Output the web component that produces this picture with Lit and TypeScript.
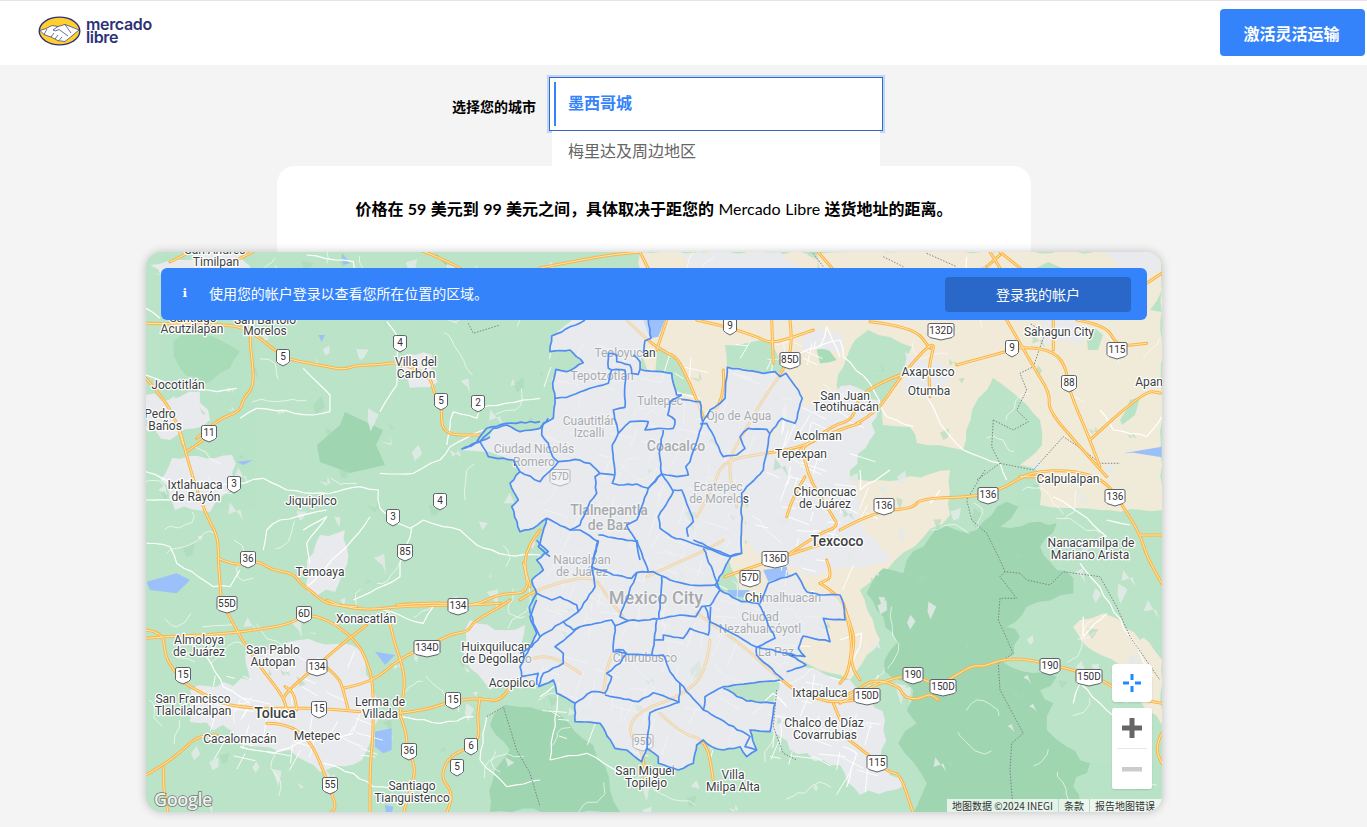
import { LitElement, html, css, svg } from "lit";
import { customElement } from "lit/decorators.js";

type Pt = [number, number];
const pts = (ox: number, oy: number, s: string): Pt[] =>
  s.trim().split(/\s+/).map((p) => {
    const [x, y] = p.split(",").map(Number);
    return [ox + x / 3, oy + y / 3] as Pt;
  });
const page = (s: string): Pt[] =>
  s.trim().split(/\s+/).map((p) => p.split(",").map(Number) as Pt);
const straight = (a: Pt[], close = false) =>
  "M" + a.map((p) => `${p[0].toFixed(1)} ${p[1].toFixed(1)}`).join("L") + (close ? "Z" : "");
const smooth = (a: Pt[]) => {
  if (a.length < 3) return straight(a);
  let d = `M${a[0][0].toFixed(1)} ${a[0][1].toFixed(1)}`;
  for (let i = 1; i < a.length - 1; i++) {
    const mx = (a[i][0] + a[i + 1][0]) / 2;
    const my = (a[i][1] + a[i + 1][1]) / 2;
    d += `Q${a[i][0].toFixed(1)} ${a[i][1].toFixed(1)} ${mx.toFixed(1)} ${my.toFixed(1)}`;
  }
  const l = a[a.length - 1];
  return d + `L${l[0].toFixed(1)} ${l[1].toFixed(1)}`;
};

/* mulberry32: small deterministic generator */
let seed = 20240613;
const rnd = () => {
  seed = (seed + 0x6d2b79f5) | 0;
  let t = Math.imul(seed ^ (seed >>> 15), 1 | seed);
  t = (t + Math.imul(t ^ (t >>> 7), 61 | t)) ^ t;
  return ((t ^ (t >>> 14)) >>> 0) / 4294967296;
};

/* roughen a closed outline so that land edges read as organic */
const jag = (a: Pt[], amp: number, step = 11): Pt[] => {
  const out: Pt[] = [];
  for (let i = 0; i < a.length; i++) {
    const p = a[i];
    const q = a[(i + 1) % a.length];
    const dx = q[0] - p[0];
    const dy = q[1] - p[1];
    const len = Math.hypot(dx, dy);
    const n = Math.max(1, Math.round(len / step));
    for (let k = 0; k < n; k++) {
      const t = k / n;
      const off = k === 0 ? 0 : (rnd() - 0.5) * 2 * amp;
      out.push([p[0] + dx * t - (dy / (len || 1)) * off, p[1] + dy * t + (dx / (len || 1)) * off]);
    }
  }
  return out;
};
/* same idea for an open road line */
const wiggle = (a: Pt[], amp: number, step = 9): Pt[] => {
  const out: Pt[] = [];
  for (let i = 0; i < a.length - 1; i++) {
    const p = a[i];
    const q = a[i + 1];
    const dx = q[0] - p[0];
    const dy = q[1] - p[1];
    const len = Math.hypot(dx, dy);
    const n = Math.max(1, Math.round(len / step));
    for (let k = 0; k < n; k++) {
      const t = k / n;
      const off = k === 0 ? 0 : (rnd() - 0.5) * 2 * amp;
      out.push([p[0] + dx * t - (dy / (len || 1)) * off, p[1] + dy * t + (dx / (len || 1)) * off]);
    }
  }
  out.push(a[a.length - 1]);
  return out;
};

const Z3 = (s: string) => pts(140, 245, s);
const Z5 = (s: string) => pts(480, 320, s);
const Z6 = (s: string) => pts(520, 540, s);
const Z7 = (s: string) => pts(140, 600, s);
const Z8 = (s: string) => pts(800, 250, s);
const Z9 = (s: string) => pts(840, 470, s);
const Z10 = (s: string) => pts(140, 430, s);

/* ---------- land ---------- */
const tan = [
  "640,252 1162,252 1162,510 1100,510 1040,505 1030,470 950,470 950,515 895,560 860,590 880,640 850,680 800,660 745,600 700,500 640,350",
  "1073,627 1080,620 1115,613 1140,635 1162,660 1162,725 1140,700 1120,665 1085,645",
  "1010,795 1012,780 1025,774 1033,785 1035,812 1008,812",
].map((s) => straight(jag(page(s), 2.2), true));

const green = [
  "838,375 855,340 868,330 912,347 905,365 882,403 883,425 910,427 917,443 963,450 972,410 993,378 1012,392 1040,420 1042,445 1020,465 1040,470 1040,505 950,505 950,470 900,480 850,480 838,470",
  "655,345 680,360 693,395 672,390 655,375",
  "725,345 770,340 785,372 727,367",
  "1087,340 1095,328 1103,335 1098,350 1088,350",
  "1120,420 1130,400 1140,397 1135,415 1122,425",
  "1150,310 1162,290 1162,312",
  "1030,270 1048,262 1062,268 1055,278 1035,278",
  "745,500 790,490 770,520 745,545",
  "1140,640 1120,620 1100,612 1120,600 1162,620",
].map((s) => straight(jag(page(s), 2), true));

const dark = [
  jag(Z9("290,175 410,180 500,95 535,110 480,170 600,155 650,160 600,230 650,300 700,325 700,370 560,410 500,470 540,500 520,555 480,570 510,590 580,610 650,620 600,660 640,700 620,780 680,830 750,880 700,950 730,1030 220,1030 260,940 175,820 230,760 200,720 220,660 130,600 170,520 110,420 80,370 130,295 190,310 200,270"), 3.5),
  page("345,412 383,430 376,445 385,465 350,473 320,462 317,445 340,425"),
  jag(page("520,707 560,715 593,745 610,790 620,812 490,812 495,770 510,750 490,725 505,705"), 4),
].map((a) => straight(a, true));
const mid = [
  Z3("100,290 150,270 250,290 300,320 270,370 190,420 120,370"),
  Z8("50,300 80,290 110,330 60,340"),
].map((a) => straight(jag(a, 3), true));

const urban = [
  "300,640 360,650 372,690 378,720 362,760 320,772 290,750 250,746 230,730 190,722 190,690 250,680 245,655",
  "172,458 232,455 232,490 210,512 175,510 160,480",
  "307,560 320,535 345,530 347,565 335,592 308,592",
  "400,358 432,355 438,382 410,388",
  "780,420 850,385 880,400 870,440 850,470 860,520 890,560 820,575 770,560 745,540 745,470",
  "780,680 800,665 850,680 870,700 885,720 880,760 905,785 860,795 840,765 790,750 768,720",
  "470,620 495,630 525,625 525,680 490,690 465,660",
  "150,265 240,252 250,275 170,290",
  "680,252 780,252 800,268 700,300",
  "1040,315 1085,305 1080,345 1040,342",
  "905,352 950,370 940,395 905,395",
  "146,395 170,400 200,392 210,420 170,440 146,430",
  "1105,250 1162,250 1162,275 1120,270",
  "800,330 840,332 842,352 805,352",
].map((s) => straight(jag(page(s), 4, 9), true));

/* deterministic scatter of small patches and side streets */
const patches: string[] = [];
const darkPatches: string[] = [];
for (let i = 0; i < 260; i++) {
  const x = 146 + rnd() * 1016;
  const y = 252 + rnd() * 560;
  const r = 4 + rnd() * 9;
  const a = rnd() * 6.28;
  const tri = `M${x.toFixed(1)} ${y.toFixed(1)}L${(x + r * Math.cos(a)).toFixed(1)} ${(y + r * Math.sin(a)).toFixed(1)}L${(x + r * Math.cos(a + 1)).toFixed(1)} ${(y + r * Math.sin(a + 1)).toFixed(1)}L${(x + 3).toFixed(1)} ${(y + r * 0.8).toFixed(1)}Z`;
  const inEast = x > 640 && y < 470;
  if (i % 3 === 2) darkPatches.push(tri);
  else if (!inEast) patches.push(tri);
}
const lanes: string[] = [];
for (let i = 0; i < 110; i++) {
  let x = 146 + rnd() * 1016;
  let y = 252 + rnd() * 560;
  let ang = rnd() * 6.28;
  const steps = 3 + Math.floor(rnd() * 5);
  const line: Pt[] = [[x, y]];
  for (let s = 0; s < steps; s++) {
    const l = 4 + rnd() * 8;
    ang += (rnd() - 0.5) * 1.8;
    x += l * Math.cos(ang);
    y += l * Math.sin(ang);
    line.push([x, y]);
  }
  lanes.push(straight(line));
}
const streets: string[] = [];
const addStreets = (x0: number, y0: number, w: number, h: number, n: number) => {
  for (let i = 0; i < n; i++) {
    const x = x0 + rnd() * w;
    const y = y0 + rnd() * h;
    const l = 8 + rnd() * 20;
    const a = 0.3 + (i % 2 ? 1.57 : 0) + (rnd() - 0.5) * 0.5;
    streets.push(`M${x.toFixed(1)} ${y.toFixed(1)}L${(x + l * Math.cos(a)).toFixed(1)} ${(y + l * Math.sin(a)).toFixed(1)}`);
  }
};
addStreets(540, 340, 280, 420, 190);
addStreets(200, 650, 170, 110, 45);
addStreets(780, 400, 90, 170, 30);
addStreets(780, 670, 100, 110, 25);

const water = [
  Z5("490,0 555,0 535,50 510,55"),
  Z6("730,90 800,80 805,105 745,125"),
  Z6("620,150 690,150 670,172 640,170"),
  Z7("705,155 765,165 735,195"),
  Z7("705,395 755,385 755,450 730,460 705,440"),
  Z10("20,455 110,430 150,450 110,490 30,480"),
  Z10("290,95 340,90 310,105"),
  Z3("605,25 630,55 610,60"),
  Z3("535,270 555,270 545,290"),
  Z8("970,610 1085,590 1085,622 1000,608"),
  Z7("735,615 760,620 755,640 738,640"),
].map((a) => straight(a, true));

/* ---------- roads ---------- */
const motor = [
  Z7("18,115 70,110 200,105 310,95 340,90 440,75 490,48 530,48 590,75 650,125 680,180 700,250 700,400 690,500 690,640"),
  Z7("18,90 70,95 75,170 105,215 130,250 190,280 240,310 330,325 440,325 540,325 660,335"),
  Z7("240,0 270,50 300,110 360,200 430,290 440,330"),
  Z7("680,75 620,120 540,190 440,275 430,300"),
  Z7("470,330 465,280 435,260"),
  Z7("610,265 700,245 760,190 830,150 900,120 940,100 985,95 1000,65 1090,15 1110,0"),
  Z7("540,185 595,230 610,270 625,330"),
  Z7("780,340 860,330 940,300 1030,295 1070,305 1100,280 1120,240"),
  Z7("1020,295 1010,350 1020,400 1000,440 930,465 900,530 940,580 920,640"),
  Z7("18,525 70,495 130,450 170,410 230,405"),
  Z7("70,500 70,570 85,640"),
  Z7("380,370 440,370 510,420 550,510 570,570 590,620 570,640"),
  Z7("780,345 800,400 800,440 825,500 820,540 790,640"),
  Z7("750,70 760,120 795,220 790,290 780,340"),
  Z7("560,0 600,20 690,30 770,20 930,15 985,15 1080,10"),
  Z3("18,235 150,238 300,240 360,280 410,320 450,345 540,360 610,375 650,360 720,360 770,350 870,390 880,440 905,480 905,570 1020,570"),
  Z3("330,250 330,300 345,420 310,460 300,500 240,520 170,580"),
  Z3("18,400 70,460 110,530 130,600"),
  Z3("280,50 340,20"),
  Z10("120,0 150,120 200,260 235,320 235,400 245,520"),
  Z10("140,65 190,30"),
  Z10("235,385 290,410 350,390 395,420 460,430 480,460 510,480 560,525 650,530"),
  Z10("770,525 900,515 1000,530 1080,490 1170,490 1150,400 1170,340 1200,300"),
  Z10("1150,400 1170,470"),
  Z5("440,0 500,60 560,100 590,110 630,190 670,290"),
  Z5("560,0 530,90"),
  Z5("650,0 740,20 830,50 870,70 930,55 1000,30"),
  Z5("875,0 880,130"),
  Z5("930,0 940,80 905,160 860,220 790,340 740,430 770,560"),
  Z5("1140,310 1070,330 970,380 860,400 730,420 700,500 650,590"),
  Z5("730,150 735,210 700,290"),
  Z5("970,380 975,460 1060,590 1075,620 1020,640 930,700"),
  Z5("975,470 940,530 920,590"),
  Z8("600,15 560,50"),
  Z8("620,210 700,350 750,430 745,480 830,580 920,680"),
  Z8("870,570 1030,420 1085,430"),
  Z8("170,520 230,490 300,380 410,260 385,350 390,440"),
  Z8("300,375 180,420 160,510 100,525 0,600"),
  Z8("470,345 620,305 660,290 750,300 795,340 810,430 860,545 900,650"),
  Z8("210,215 340,230 390,295"),
  Z8("830,210 920,225 950,290 1040,280"),
  Z8("760,210 760,300"),
  Z8("1040,100 1085,70"),
  Z8("660,680 830,680 900,690"),
  Z9("0,180 100,125 220,115 240,85 420,80 500,50 570,5 700,0 790,30 830,80 900,190 920,260 965,340"),
  Z9("900,195 965,195"),
  Z9("0,700 90,650 190,615 250,625 290,650 340,620 400,585 430,590 480,570 540,565 620,580 700,600 790,630 860,680 965,700"),
  Z9("0,680 40,670 100,625 180,650 190,680 230,690 270,670 295,690"),
  Z9("10,400 40,500 25,610 0,640"),
  Z9("0,790 80,850 150,910 180,910 220,1030"),
  Z9("965,790 945,830 965,880"),
  Z6("615,110 730,70 880,20 950,0"),
  Z6("920,60 940,110 900,130"),
  Z6("900,130 960,165 990,250 1005,300 990,370 1020,420"),
  Z6("850,450 900,490 1020,480"),
  Z6("940,490 965,550"),
  Z6("530,220 650,300 760,400 850,470"),
  Z6("0,180 40,150 220,100 260,170 310,230"),
  Z6("180,400 100,340 0,365"),
  Z6("570,300 560,400 480,470 360,510 320,570 370,640 375,720"),
  Z6("420,520 480,580 560,600 580,720"),
  Z6("250,460 260,380 280,340"),
  Z6("610,0 580,20 380,110"),
  page("420,250 440,258 460,268"),
  page("540,268 600,256 640,252"),
  page("640,252 648,268"),
  page("818,252 832,268"),
  page("170,262 190,252"),
  page("1000,252 1020,268"),
  page("1000,268 990,252"),
].map((a) => smooth(a));

const minor = [
  Z10("230,170 370,145 440,180 520,190 590,185 660,170 715,180 720,235 760,275 810,295 850,270 910,290 960,300 1010,345 1100,375 1200,375"),
  Z10("18,125 100,160 150,150"),
  Z10("18,210 100,210"),
  Z10("815,295 780,400 780,440 640,510"),
  Z10("690,260 620,350 500,470"),
  Z10("370,360 380,300 420,270 560,240"),
  Z10("20,340 90,350 110,400 220,470 270,470 300,420"),
  Z10("720,130 820,130 900,90 930,50 1030,0"),
  Z10("490,300 560,260 500,340 510,400"),
  Z3("500,30 640,50 650,100"),
  Z3("740,230 770,270 770,420 720,500"),
  Z3("490,370 530,410 570,450 570,500 520,510 350,490 300,520"),
  Z3("18,390 100,420 230,440 290,430"),
  Z3("920,600 940,500 1010,520 1020,490 1200,460"),
  Z3("18,190 60,220"),
  Z7("200,170 250,260 330,310"),
  Z7("550,490 640,520 700,560 790,570"),
  Z7("780,350 900,370 1000,350"),
  Z7("300,440 400,460 500,420 640,400"),
  Z7("1040,350 1020,480 1100,560 1200,540"),
  Z7("730,30 850,70 880,20"),
  Z8("120,320 80,230 60,290"),
  Z8("0,310 120,270 130,320 210,400 260,500 340,530"),
  Z8("380,440 420,520 490,600 600,640 620,690"),
  Z8("900,480 940,540 1040,560 1085,500"),
  Z8("500,20 490,170"),
  Z9("60,0 60,60 150,0"),
  Z9("640,80 720,130 800,200"),
  Z9("720,280 760,330 810,400 870,500 940,620"),
  Z9("730,440 730,500 800,430"),
  Z9("700,700 720,640 780,700 840,750"),
  Z9("0,510 65,490 60,530 30,600"),
  Z9("10,830 50,850 20,950"),
  Z9("800,150 870,165"),
  Z9("270,100 300,60"),
  Z6("700,520 760,460 800,500"),
  Z6("60,470 120,430 90,660"),
  Z6("90,660 200,640 300,700"),
].map((a) => straight(wiggle(a, 1.3)));

const dotted = [
  Z9("435,0 410,40 380,90 395,150 440,190 480,270 495,305 540,310 560,330 630,345 670,305 780,320 830,410 870,500 960,630"),
  Z9("495,305 480,320 530,385 480,385 475,450 520,550 475,580 480,660 550,790 515,820 510,900 520,1030"),
  Z8("580,510 575,590 600,640 530,690"),
  Z8("580,510 640,540 685,515 650,480 680,420 660,370 700,350 735,250 690,220"),
  Z8("600,640 700,660 790,560 850,600 900,640 960,640"),
  Z8("40,10 70,50"),
  Z8("250,20 310,50"),
  Z8("380,10 470,50"),
  Z3("890,30 920,60"),
  Z3("985,235 1000,265 1080,240"),
  Z6("770,450 760,560 790,640 830,660"),
  Z7("1040,350 1090,320 1130,450 1170,520 1200,620"),
].map((a) => straight(a));

/* ---------- municipality polygons ---------- */
const outer = straight(
  page(`585,310 648,310 651,338 645,341 643,353 640,362 640,369 672,373 673,383 677,395 682,399 700,402 703,422 707,422 710,410 720,403 725,398 727,367 763,373 775,372 780,377 786,373 798,390 802,398 795,423 782,418 770,433 767,453 763,470 747,487 742,493 742,553 731,557 715,585 720,590 742,602 758,603 768,583 796,573 807,592 820,595 840,595 843,603 845,620 823,618 830,642 803,636 798,648 805,657 787,653 806,665 787,672 783,680 723,687 747,701 775,703 770,732 750,730 757,750 747,757 740,747 723,750 712,747 703,740 697,745 693,763 678,770 658,763 658,757 647,748 642,762 627,750 615,748 600,723 575,722 575,703 557,693 553,680 538,687 537,685 522,677 520,667 537,633 530,617 537,600 537,593 532,580 543,570 537,560 548,552 537,540 538,547 547,518 533,528 520,532 512,507 518,500 510,483 520,472 513,460 490,452 462,450 490,436 493,428 507,425 520,432 540,428 548,418 553,418 555,398 553,383 556,369 567,372 583,363 570,350 550,352 552,336`),
  true
);

const blue = [
  Z5("315,0 215,48 210,95 270,90 310,128 260,155 228,148 218,190 225,235 260,232 330,205 385,190 395,150 435,150 435,262 400,270 415,340"),
  Z5("385,100 385,145 395,150"),
  Z5("385,100 410,105 410,125 450,135 455,160 475,163 480,148 575,160 580,190 590,225 605,225"),
  Z5("460,105 480,125 480,148"),
  Z5("505,0 513,55 495,62 490,100"),
  Z5("605,225 570,245 563,285 585,300 580,325 535,325 495,330 505,305 450,305 415,340 397,375 405,460 397,490 430,495 470,492 505,505 545,462"),
  Z5("605,238 660,245 668,305 655,350 630,425 617,440 625,465 590,470 545,462 538,400 550,330"),
  Z5("668,305 690,270 720,250 735,235 742,142 850,160 885,155 900,170 918,160 955,210 967,235 945,310 905,295 870,340 860,400 850,450 800,500 785,520 785,700 750,710"),
  Z5("868,340 860,328 805,325 780,350 795,385 770,405 730,410 680,310 660,312"),
  Z5("225,235 220,295 190,310 185,345 205,370 218,410 235,425 285,418 330,430 360,460 405,465"),
  Z5("205,295 180,325 120,335 80,315 40,325 0,365 25,410 100,420 120,455 180,485 235,425"),
  page("480,442 462,449 490,437"),
  Z5("120,455 90,490 115,540 95,560 120,635 160,625 200,595 270,630 300,615 330,545 350,520 345,470 360,460"),
  Z5("200,595 175,680 210,710"),
  Z5("545,462 505,505 470,600 440,615 470,665 480,720"),
  Z5("545,462 580,515 535,590 540,625 575,650 670,680 750,710"),
  Z5("580,510 605,510 640,605 620,625 625,650"),
  Z5("270,630 300,630 355,665 340,720"),
  Z5("355,645 470,665"),
  Z6("235,0 215,80 280,105 335,115 350,98 400,95 450,120 510,135 585,135"),
  Z6("350,0 385,95"),
  Z6("520,0 630,48 665,40"),
  Z6("550,25 600,150 570,197"),
  Z6("633,50 585,135 600,150"),
  Z6("600,150 665,185 715,190 765,295 710,322 600,260 572,247 555,200"),
  Z6("720,190 745,130 828,100 860,155 900,165 960,165 970,190 975,240 910,235 930,305 850,288 835,325 855,350 800,340 710,320 710,345 790,420"),
  Z6("800,395 858,375 800,340"),
  Z6("350,98 300,230 325,242"),
  Z6("425,110 417,235"),
  Z6("570,197 545,200 527,230 480,225 417,237 325,242 285,257 275,240 180,260 105,320 130,340 130,370 70,400 55,440"),
  Z6("215,80 225,140 175,215 130,245 160,270 180,260"),
  Z6("130,245 60,290 35,320 0,340"),
  Z6("50,160 95,180 120,170 170,195 175,215"),
  Z6("35,120 50,160 28,200 40,250 60,290"),
  Z6("285,257 280,335 320,340 300,370 260,400 275,410 255,460 215,455 165,490 165,545 240,550 285,625 320,630 365,665 380,625"),
  Z6("285,330 310,330 320,343 390,345 430,345 450,395 480,430 550,510 690,590 675,620 710,630"),
  Z6("410,240 403,300 395,345"),
  Z6("403,300 430,300 430,285 490,295 510,265 565,285 572,200"),
  Z6("480,430 477,487 400,458 355,485 255,465"),
  Z6("477,487 390,518 380,630"),
  Z6("380,625 415,650 415,670 475,690 520,670 530,615 550,600 575,620 610,630 660,620 680,650 710,630 690,570 750,575 765,490 680,483 610,445"),
  Z6("550,510 555,470 610,440 780,420"),
  Z6("50,0 85,35 50,60 70,90 35,120"),
  Z6("165,490 110,460 100,420 55,440"),
  Z7("1190,0 1170,50 1190,100 1140,200 1145,230 1195,220 1190,255"),
  Z3("1010,590 1040,550 1100,535 1200,530"),
].map((a) => straight(wiggle(a, 0.7, 5)));

/* ---------- labels ---------- */
type L = [string, number, number, number?, number?];
const labels: L[] = [
  ["San Andrés", 215, 250], ["Timilpan", 216, 262], ["Santiago", 193, 318], ["Acutzilapan", 192, 329], ["San Bartolo", 265, 320], ["Morelos", 265, 331],
  ["Villa del", 416, 362], ["Carbón", 416, 374], ["Jocotitlán", 178, 385], ["Pedro", 160, 414], ["Baños", 165, 426],
  ["Ixtlahuaca", 195, 485], ["de Rayón", 196, 497], ["Jiquipilco", 311, 501], ["Temoaya", 320, 572],
  ["Xonacatlán", 366, 619], ["Almoloya", 199, 640], ["de Juárez", 199, 652], ["San Pablo", 273, 650], ["Autopan", 273, 662],
  ["San Francisco", 193, 699], ["Tlalcilalcalpan", 193, 711], ["Toluca", 275, 713, 14, 500], ["Lerma de", 380, 702], ["Villada", 380, 714],
  ["Cacalomacán", 240, 739], ["Metepec", 317, 736], ["Santiago", 412, 786], ["Tianguistenco", 412, 798],
  ["Huixquilucan", 496, 647], ["de Degollado", 497, 659], ["Acopilco", 512, 683],
  ["Teoloyucan", 625, 353], ["Tepotzotlán", 602, 376], ["Tultepec", 660, 401], ["Cuautitlán", 590, 421], ["Izcalli", 589, 433],
  ["Ciudad Nicolás", 534, 449], ["Romero", 534, 462], ["Coacalco", 676, 446, 14, 500], ["Ojo de Agua", 739, 416],
  ["Ecatepec", 718, 487], ["de Morelos", 719, 499], ["Tlalnepantla", 609, 510, 14, 500], ["de Baz", 609, 525, 14, 500],
  ["Acolman", 818, 436], ["Tepexpan", 801, 454], ["San Juan", 845, 396], ["Teotihuacán", 846, 407], ["Axapusco", 928, 372], ["Otumba", 929, 391],
  ["Sahagun City", 1059, 332], ["Apan", 1149, 382], ["Calpulalpan", 1068, 479], ["Chiconcuac", 825, 492], ["de Juárez", 825, 504], ["Texcoco", 837, 541, 14, 500],
  ["Nanacamilpa de", 1091, 543], ["Mariano Arista", 1090, 555], ["Naucalpan", 582, 560], ["de Juárez", 582, 572], ["Mexico City", 656, 597, 18, 500],
  ["Chimalhuacán", 783, 598], ["Ciudad", 760, 617], ["Nezahualcóyotl", 760, 629], ["La Paz", 776, 652], ["Churubusco", 645, 658],
  ["Ixtapaluca", 820, 693], ["Chalco de Díaz", 824, 723], ["Covarrubias", 825, 735], ["San Miguel", 645, 771], ["Topilejo", 646, 783], ["Villa", 733, 775], ["Milpa Alta", 733, 787],
];

const shields: [string, number, number][] = [
  ["5", 283, 357], ["4", 400, 343], ["5", 441, 401], ["2", 478, 403], ["11", 209, 433], ["3", 234, 484], ["4", 440, 501], ["3", 393, 517], ["85", 405, 552], ["36", 248, 559],
  ["55D", 227, 604], ["6D", 304, 614], ["134", 458, 606], ["15", 183, 675], ["134", 317, 667], ["134D", 427, 648], ["15", 319, 709], ["15", 453, 700], ["36", 409, 751], ["6", 471, 746], ["5", 457, 767], ["55", 330, 785],
  ["9", 730, 326], ["85D", 790, 360], ["57D", 560, 477], ["132D", 941, 331], ["9", 1012, 348], ["115", 1117, 350], ["88", 1069, 383],
  ["136", 884, 506], ["136", 988, 495], ["136", 1115, 497], ["190", 913, 675], ["150D", 867, 696], ["150D", 943, 687], ["190", 1050, 666], ["150D", 1089, 677], ["115", 877, 763],
  ["136D", 775, 559], ["57D", 750, 578], ["95D", 643, 742],
];

const shieldPath = (n: number) => {
  const w = n === 1 ? 6.5 : n === 2 ? 7.5 : n === 3 ? 10 : 13;
  const h = 7.5;
  return `M${-w} ${-h + 1.5}Q${-w} ${-h} ${-w + 2} ${-h}L${w - 2} ${-h}Q${w} ${-h} ${w} ${-h + 1.5}L${w} ${h - 3}L${w - 2} ${h - 1}L0 ${h + 1.5}L${-w + 2} ${h - 1}L${-w} ${h - 3}Z`;
};

@customElement("app-root")
export class AppRoot extends LitElement {
  static styles = css`
    :host {
      display: block;
      min-height: 827px;
      background: #f4f4f4;
      font-family: "Noto Sans CJK SC", "Liberation Sans", sans-serif;
      color: #000;
    }
    .top {
      display: flex;
      align-items: center;
      justify-content: space-between;
      height: 64px;
      background: #fff;
      border-top: 1px solid #e8e2ee;
      padding: 0 2px 0 38px;
    }
    .brand {
      display: flex;
      align-items: center;
      gap: 5px;
      margin-top: -4px;
    }
    .brand svg {
      display: block;
    }
    .brand-text {
      font-family: Inter, "Liberation Sans", sans-serif;
      font-weight: 600;
      font-size: 16px;
      line-height: 13px;
      letter-spacing: -0.35px;
      color: #2d3277;
    }
    .brand-text span {
      display: block;
    }
    .cta {
      width: 145px;
      height: 47px;
      margin-top: -1px;
      border: 0;
      border-radius: 4px;
      background: #3483fa;
      color: #fff;
      font: 700 16px "Noto Sans CJK SC", sans-serif;
      text-align: center;
      padding: 0 2px 0 0;
    }
    .picker {
      display: flex;
      align-items: center;
      padding: 12px 0 0 452px;
      height: 54px;
    }
    .picker-label {
      font-size: 14px;
      font-weight: 700;
      width: 97px;
      margin-top: 4px;
      line-height: 20px;
    }
    .select {
      position: relative;
      box-sizing: border-box;
      width: 334px;
      height: 54px;
      background: #fff;
      border: 1px solid #3568c4;
      box-shadow: 0 0 0 2px #bcd6f7;
      display: flex;
      align-items: center;
      padding-left: 18px;
      color: #3483fa;
      font-size: 16px;
      font-weight: 700;
    }
    .select-inner {
      margin-top: -4px;
    }
    .marker {
      position: absolute;
      left: 4px;
      top: 4px;
      width: 2px;
      height: 44px;
      background: #3483fa;
    }
    .menu {
      position: absolute;
      z-index: 4;
      left: 2px;
      right: 2px;
      top: 53px;
      height: 35px;
      background: #fff;
      color: #666;
      font-weight: 400;
      font-size: 16px;
      line-height: 38px;
      padding-left: 16px;
    }
    .stage {
      display: grid;
      grid-template-columns: 1016px;
      justify-items: center;
      margin: 35px 0 0 146px;
      width: 1016px;
    }
    .card {
      grid-area: 1 / 1;
      box-sizing: border-box;
      width: 754px;
      height: 120px;
      background: #fff;
      border-radius: 18px 18px 0 0;
      padding-top: 31px;
      text-align: center;
      font-size: 16px;
      font-weight: 700;
      line-height: 24px;
      word-spacing: 0.5px;
      font-family: Lato, "Noto Sans CJK SC", sans-serif;
    }
    .card .brandname {
      font-weight: 400;
    }
    .map {
      grid-area: 1 / 1;
      position: relative;
      width: 1016px;
      height: 560px;
      margin-top: 86px;
      border-radius: 16px;
      overflow: hidden;
      box-shadow: 0 0 10px rgba(0, 0, 0, 0.22);
      background: #bbe3c7;
    }
    .tiles {
      position: absolute;
      inset: 0;
      display: block;
      width: 1016px;
      height: 560px;
    }
    .lbl {
      font-family: Roboto, "Liberation Sans", sans-serif;
      text-anchor: middle;
      dominant-baseline: central;
      fill: #3c3f44;
      stroke: #fff;
      stroke-width: 2.5px;
      stroke-linejoin: round;
      paint-order: stroke;
    }
    .sh {
      font-family: Roboto, "Liberation Sans", sans-serif;
      font-size: 10px;
      text-anchor: middle;
      dominant-baseline: central;
      fill: #333;
    }
    .glogo {
      font-family: "Open Sans", "Liberation Sans", sans-serif;
      font-size: 18px;
      font-weight: 600;
      fill: #f1f1f1;
      stroke: #6f7a74;
      stroke-width: 1.6px;
      paint-order: stroke;
      letter-spacing: -0.4px;
    }
    .banner {
      position: absolute;
      left: 15px;
      right: 15px;
      top: 16px;
      height: 52px;
      background: #3483fa;
      border-radius: 6px;
      display: flex;
      align-items: center;
      color: #fff;
      font-size: 14px;
      padding: 0 16px 0 0;
    }
    .info {
      width: 48px;
      text-align: center;
      font: 400 12px "DejaVu Sans", sans-serif;
      flex: none;
      margin-top: -3px;
    }
    .msg {
      flex: 1;
      margin-top: -3px;
      letter-spacing: -0.05px;
    }
    .login {
      width: 186px;
      height: 35px;
      background: #2968c8;
      color: #fff;
      border-radius: 4px;
      text-align: center;
      line-height: 35px;
      font-size: 14px;
    }
    .ctl {
      position: absolute;
      background: #fff;
      border-radius: 4px;
      width: 40px;
      left: 966px;
      box-shadow: 0 1px 2px rgba(0, 0, 0, 0.12);
    }
    .locate {
      top: 412px;
      height: 38px;
      display: flex;
      align-items: center;
      justify-content: center;
    }
    .zoom {
      top: 456px;
      height: 81px;
      display: flex;
      flex-direction: column;
      align-items: center;
      border-radius: 2px;
    }
    .zoom-btn {
      height: 40px;
      display: flex;
      align-items: center;
      justify-content: center;
    }
    .rule {
      width: 30px;
      height: 1px;
      background: #e6e6e6;
      flex: none;
    }
    .attr {
      position: absolute;
      right: 0;
      bottom: 0;
      height: 13px;
      width: 215px;
      box-sizing: border-box;
      background: rgba(255, 255, 255, 0.72);
      display: flex;
      align-items: center;
      font-size: 10px;
      line-height: 13px;
      color: #333;
      padding-left: 5px;
      white-space: nowrap;
    }
    .attr span {
      display: block;
    }
    .attr .sep {
      width: 1px;
      height: 13px;
      background: #c8d4c8;
      margin: 0 5px;
    }
    .a1 { width: 101px; }
    .a2 { width: 20px; }
  `;

  private logo() {
    return html`<svg width="43" height="30" viewBox="0 0 43 30" aria-hidden="true">
      <ellipse cx="21.5" cy="15" rx="21" ry="14.5" fill="#2d3277"></ellipse>
      <ellipse cx="21.5" cy="15" rx="19.6" ry="13.2" fill="#ffcf2e"></ellipse>
      <path d="M2 14.5Q8 13 14 9.5L20 10.5L27 8.5Q34 11 41 14L35 19L27 25.5Q20 26 13 21L6 18.5Z" fill="#fff" stroke="#2d3277" stroke-width=".7"></path>
      <path d="M20 10.5L15 14Q17 16 21 13.5L30 20M13 21L16 17M17 23L20 19M21 24.5L24 21M27 8.5L33 17M6 18.5L9 13" fill="none" stroke="#2d3277" stroke-width=".7"></path>
    </svg>`;
  }

  private tiles() {
    return svg`<svg class="tiles" viewBox="146 252 1016 560" aria-hidden="true">
      <g fill="#f1ead9">${tan.map((d) => svg`<path d=${d}></path>`)}</g>
      <g fill="#bbe3c7">${green.map((d) => svg`<path d=${d}></path>`)}</g>
      <g fill="#a9dcb9">${mid.map((d) => svg`<path d=${d}></path>`)}</g>
      <g fill="#9fd5b0">${dark.map((d) => svg`<path d=${d}></path>`)}</g>
      <path d=${outer} fill="#e8eaed"></path>
      <g fill="#e8eaed">${urban.map((d) => svg`<path d=${d}></path>`)}</g>
      <g fill="#e4ebe9" opacity=".85">${patches.map((d) => svg`<path d=${d}></path>`)}</g>
      <g fill="#a7d9b7" opacity=".55">${darkPatches.map((d) => svg`<path d=${d}></path>`)}</g>
      <g fill="#9cc0f9">${water.map((d) => svg`<path d=${d}></path>`)}</g>
      <g fill="none" stroke="#fff" stroke-width=".8" opacity=".8">${lanes.map((d) => svg`<path d=${d}></path>`)}</g>
      <g fill="none" stroke="#fff" stroke-width=".9">${streets.map((d) => svg`<path d=${d}></path>`)}</g>
      <g fill="none" stroke="#fff" stroke-width="1.2" stroke-linejoin="round">${minor.map((d) => svg`<path d=${d}></path>`)}</g>
      <g fill="none" stroke="#7d8388" stroke-width="1" stroke-dasharray="1.5 1.5">${dotted.map((d) => svg`<path d=${d}></path>`)}</g>
      <g fill="none" stroke="#fbb545" stroke-width="3" stroke-linejoin="round" stroke-linecap="round">${motor.map((d) => svg`<path d=${d}></path>`)}</g>
      <g fill="none" stroke="#ffe6b0" stroke-width="1" stroke-linejoin="round">${motor.map((d) => svg`<path d=${d}></path>`)}</g>
      ${shields.map(
        ([t, x, y]) => svg`<g transform="translate(${x} ${y})">
          <path d=${shieldPath(t.length)} fill="#fff" stroke="#5f6368" stroke-width="1"></path>
          <text class="sh" y="-.5">${t}</text>
        </g>`
      )}
      ${labels.map(
        ([t, x, y, fs, fw]) => svg`<text class="lbl" x=${x} y=${y} font-size=${fs ?? 12} font-weight=${fw ?? 400}>${t}</text>`
      )}
      <path d=${outer} fill="#e9eaee" fill-opacity=".62"></path>
      <g fill="none" stroke="#4f8df0" stroke-width="1.7" stroke-linejoin="round">${blue.map((d) => svg`<path d=${d}></path>`)}</g>
      <text class="glogo" x="154" y="806">Google</text>
    </svg>`;
  }

  render() {
    return html`
      <header class="top">
        <div class="brand">
          ${this.logo()}
          <div class="brand-text"><span>mercado</span><span>libre</span></div>
        </div>
        <button class="cta">激活灵活运输</button>
      </header>
      <div class="picker">
        <div class="picker-label">选择您的城市</div>
        <div class="select">
          <i class="marker"></i>
          <span class="select-inner">墨西哥城</span>
          <div class="menu">梅里达及周边地区</div>
        </div>
      </div>
      <main class="stage">
        <section class="card">
          价格在 59 美元到 99 美元之间，具体取决于距您的
          <span class="brandname">Mercado Libre</span> 送货地址的距离。
        </section>
        <section class="map">
          ${this.tiles()}
          <div class="banner">
            <span class="info">ℹ</span>
            <span class="msg">使用您的帐户登录以查看您所在位置的区域。</span>
            <div class="login">登录我的帐户</div>
          </div>
          <div class="ctl locate">
            <svg width="20" height="20" viewBox="0 0 20 20" aria-hidden="true">
              <path d="M8.5 1h3v6h-3zM8.5 13h3v6h-3zM1 8.5h6v3H1zM13 8.5h6v3h-6z" fill="#1a8cff"></path>
            </svg>
          </div>
          <div class="ctl zoom">
            <div class="zoom-btn">
              <svg width="20" height="20" viewBox="0 0 20 20" aria-hidden="true"><path d="M7.5 0h5v7.5H20v5h-7.5V20h-5v-7.5H0v-5h7.5z" fill="#666"></path></svg>
            </div>
            <div class="rule"></div>
            <div class="zoom-btn">
              <svg width="20" height="20" viewBox="0 0 20 20" aria-hidden="true"><path d="M0 8h20v4.5H0z" fill="#ccc"></path></svg>
            </div>
          </div>
          <div class="attr">
            <span class="a1">地图数据 ©2024 INEGI</span><span class="sep"></span>
            <span class="a2">条款</span><span class="sep"></span>
            <span>报告地图错误</span>
          </div>
        </section>
      </main>
    `;
  }
}
